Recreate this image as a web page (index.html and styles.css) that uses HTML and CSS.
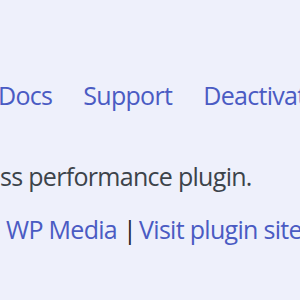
FILE: index.html
```html
<!DOCTYPE html>
<html>
<head>
<meta charset="utf-8">
<link rel="stylesheet" href="styles.css">
</head>
<body>
<div class="plugin">
  <div class="actions">
    <a class="action">Docs</a>
    <a class="action">Support</a>
    <a class="action">Deactivate</a>
  </div>
  <p class="desc">ss performance plugin.</p>
  <div class="meta">
    <a class="link">WP Media</a>
    <span class="sep">|</span>
    <a class="link">Visit plugin site</a>
  </div>
</div>
</body>
</html>
```
FILE: styles.css
```css
html, body {
  margin: 0;
  padding: 0;
  background: #eef0fb;
  width: 300px;
  height: 300px;
  overflow: hidden;
}
.plugin {
  font-family: "Open Sans", "Noto Sans", sans-serif;
  font-size: 25px;
  letter-spacing: -0.7px;
  white-space: nowrap;
  padding-top: 77px;
}
.actions {
  display: flex;
  gap: 31px;
  line-height: 36px;
  margin-left: -2px;
}
.action, .link {
  color: #4a5bc3;
  text-decoration: none;
}
.desc {
  margin: 45px 0 0 0;
  line-height: 36px;
  color: #3c434a;
}
.meta {
  margin-top: 17px;
  line-height: 36px;
  padding-left: 6px;
  display: flex;
  color: #1d2327;
}
.sep {
  margin: 0 3px 0 6px;
}
```
